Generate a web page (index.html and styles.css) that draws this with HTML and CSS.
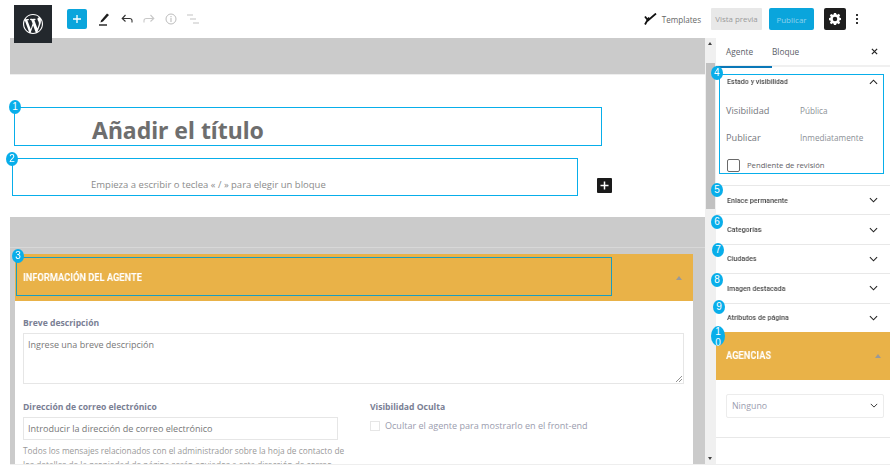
FILE: index.html
```html
<!DOCTYPE html>
<html lang="es">
<head>
<meta charset="utf-8">
<title>Agente</title>
<link rel="stylesheet" href="styles.css">
</head>
<body>
<div class="app">
  <header class="topbar">
    <div class="logo">
      <svg width="20" height="20" viewBox="0 0 20 20"><path fill="#fff" d="M20 10c0-5.51-4.49-10-10-10C4.48 0 0 4.49 0 10c0 5.52 4.48 10 10 10 5.51 0 10-4.48 10-10zM7.78 15.37L4.37 6.22c.55-.02 1.17-.08 1.17-.08.5-.06.44-1.13-.06-1.11 0 0-1.45.11-2.37.11-.18 0-.37 0-.58-.01C4.12 2.69 6.87 1.11 10 1.11c2.33 0 4.45.87 6.05 2.34-.68-.11-1.65.39-1.65 1.58 0 .74.45 1.36.9 2.1.35.61.55 1.36.55 2.46 0 1.49-1.4 5-1.4 5l-3.03-8.37c.54-.02.82-.17.82-.17.5-.05.44-1.25-.06-1.22 0 0-1.44.12-2.38.12-.87 0-2.33-.12-2.33-.12-.5-.03-.56 1.2-.06 1.22l.92.08 1.26 3.41zM17.41 10c.24-.64.74-1.87.43-4.25.7 1.29 1.05 2.71 1.05 4.25 0 3.29-1.73 6.24-4.4 7.78.97-2.59 1.94-5.2 2.92-7.78zM6.1 18.09C3.12 16.65 1.11 13.53 1.11 10c0-1.3.23-2.48.72-3.59C3.25 10.3 4.67 14.2 6.1 18.09zm4.03-6.63l2.58 6.98c-.86.29-1.76.45-2.71.45-.79 0-1.57-.11-2.29-.33.81-2.38 1.62-4.74 2.42-7.1z"/></svg>
    </div>
    <div class="tools">
      <button class="add"><svg width="10" height="10" viewBox="0 0 10 10"><path d="M5 1v8M1 5h8" stroke="#fff" stroke-width="1.3"/></svg></button>
      <svg class="tool pen" width="12" height="14" viewBox="0 0 12 14"><path d="M3 8.500 9 1.500l2 1.500-6 6.500-2.500 1z" fill="#1e1e1e"/><path d="M1 13h8" stroke="#1e1e1e" stroke-width="1.400"/></svg>
      <svg class="tool undo" width="12" height="10" viewBox="0 0 12 10"><path d="M11 8.500V6.500C11 5 10 4.500 8.500 4.500H1.500M4.500 1 1.200 4.500 4.500 7.500" fill="none" stroke="#333" stroke-width="1.100"/></svg>
      <svg class="tool redo" width="12" height="10" viewBox="0 0 12 10"><path d="M1 8.500V6.500C1 5 2 4.500 3.500 4.500h7M7.500 1l3.300 3.500L7.500 7.500" fill="none" stroke="#c8c8c8" stroke-width="1.100"/></svg>
      <svg class="tool info" width="12" height="12" viewBox="0 0 12 12"><circle cx="6" cy="6" r="5" fill="none" stroke="#bdbdbd"/><path d="M6 5v4M6 3v1.200" stroke="#bdbdbd" stroke-width="1.100"/></svg>
      <svg class="tool list" width="12" height="10" viewBox="0 0 12 10"><path d="M0 1h6M3 5h6M6 9h6" stroke="#c4c4c4" stroke-width="1.100"/></svg>
    </div>
    <div class="actions">
      <svg class="tpl" width="13" height="12" viewBox="0 0 13 12"><path d="M1 3.500 4 7.500 12 .5M1 11.500 5 4.500" fill="none" stroke="#111" stroke-width="1.800"/></svg>
      <span class="tpl-label">Templates</span>
      <span class="preview">Vista previa</span>
      <span class="publish">Publicar</span>
      <span class="settings"><svg width="12" height="12" viewBox="0 0 24 24"><path fill="#fff" fill-rule="evenodd" d="M10 1h4l.7 3.200 2 .8 2.800-1.800 2.800 2.800-1.800 2.800.8 2 3.200.7v4l-3.200.7-.8 2 1.800 2.800-2.800 2.800-2.800-1.800-2 .8L14 26.200h-4l-.7-3.200-2-.8-2.800 1.800-2.800-2.800 1.800-2.800-.8-2L-.5 15.700v-4l3.200-.7.8-2L1.700 6.200 4.500 3.400l2.800 1.800 2-.8zM12 9a4 4 0 1 0 0 9 4 4 0 0 0 0-9z" transform="translate(0 -1.500)"/></svg></span>
      <span class="dots"><i></i><i></i><i></i></span>
    </div>
  </header>

  <div class="workspace">
    <main class="editor">
      <div class="band band-top"></div>
      <div class="canvas">
        <h1 class="post-title">Añadir el título</h1>
        <div class="prompt-row">
          <p class="prompt">Empieza a escribir o teclea « / » para elegir un bloque</p>
          <span class="inline-add"><svg width="9" height="9" viewBox="0 0 9 9"><path d="M4.500 .5v8M.5 4.500h8" stroke="#fff" stroke-width="1.500"/></svg></span>
        </div>
      </div>
      <div class="metabox-area">
        <div class="area-line"></div>
        <section class="metabox">
          <div class="orange-head agent-head">
            <span class="cond">INFORMACIÓN DEL AGENTE</span>
            <i class="tri"></i>
          </div>
          <div class="metabox-body">
            <label class="field-label">Breve descripción</label>
            <div class="textarea">Ingrese una breve descripción<svg class="grip" width="7" height="7" viewBox="0 0 7 7"><path d="M1 7 7 1M4 7l3-3" stroke="#777" stroke-width=".8"/></svg></div>
            <div class="columns">
              <div class="col-mail">
                <label class="field-label">Dirección de correo electrónico</label>
                <div class="input">Introducir la dirección de correo electrónico</div>
                <p class="help">Todos los mensajes relacionados con el administrador sobre la hoja de contacto de los detalles de la propiedad de página serán enviados a esta dirección de correo</p>
              </div>
              <div class="col-hidden">
                <label class="field-label">Visibilidad Oculta</label>
                <div class="check-row"><i class="mini-check"></i>Ocultar el agente para mostrarlo en el front-end</div>
              </div>
            </div>
          </div>
        </section>
      </div>
    </main>

    <div class="scrollbar">
      <i class="arrow up"></i>
      <i class="thumb"></i>
      <i class="arrow down"></i>
    </div>

    <aside class="sidebar">
      <nav class="tabs">
        <span class="tab active">Agente</span>
        <span class="tab">Bloque</span>
        <svg class="close" width="7" height="7" viewBox="0 0 8 8"><path d="M1 1l6 6M7 1 1 7" stroke="#222" stroke-width="1.400"/></svg>
      </nav>
      <section class="status">
        <div class="panel-title first"><span class="cond">Estado y visibilidad</span><svg class="chev" width="9" height="6" viewBox="0 0 10 6"><path d="M1 5l4-4 4 4" fill="none" stroke="#222" stroke-width="1.200"/></svg></div>
        <div class="status-row"><span class="key">Visibilidad</span><span class="val">Pública</span></div>
        <div class="status-row second"><span class="key">Publicar</span><span class="val">Inmediatamente</span></div>
        <div class="pending"><i class="box"></i>Pendiente de revisión</div>
      </section>
      <div class="panel-title row"><span class="cond">Enlace permanente</span><svg class="chev" width="9" height="6" viewBox="0 0 10 6"><path d="M1 1l4 4 4-4" fill="none" stroke="#222" stroke-width="1.200"/></svg></div>
      <div class="panel-title row"><span class="cond">Categorías</span><svg class="chev" width="9" height="6" viewBox="0 0 10 6"><path d="M1 1l4 4 4-4" fill="none" stroke="#222" stroke-width="1.200"/></svg></div>
      <div class="panel-title row"><span class="cond">Ciudades</span><svg class="chev" width="9" height="6" viewBox="0 0 10 6"><path d="M1 1l4 4 4-4" fill="none" stroke="#222" stroke-width="1.200"/></svg></div>
      <div class="panel-title row"><span class="cond">Imagen destacada</span><svg class="chev" width="9" height="6" viewBox="0 0 10 6"><path d="M1 1l4 4 4-4" fill="none" stroke="#222" stroke-width="1.200"/></svg></div>
      <div class="panel-title row"><span class="cond">Atributos de página</span><svg class="chev" width="9" height="6" viewBox="0 0 10 6"><path d="M1 1l4 4 4-4" fill="none" stroke="#222" stroke-width="1.200"/></svg></div>
      <div class="orange-head agency-head"><span class="cond">AGENCIAS</span><i class="tri"></i></div>
      <div class="agency-body">
        <div class="select">Ninguno<svg width="8" height="5" viewBox="0 0 10 6"><path d="M1 1l4 4 4-4" fill="none" stroke="#333" stroke-width="1.200"/></svg></div>
      </div>
    </aside>
  </div>

  <div class="mark-box mark-title"></div>
  <div class="mark-box mark-prompt"></div>
  <div class="mark-box mark-agent"></div>
  <div class="mark-box mark-status"></div>
  <b class="badge b1">1</b>
  <b class="badge b2">2</b>
  <b class="badge b3">3</b>
  <b class="badge b4">4</b>
  <b class="badge b5">5</b>
  <b class="badge b6">6</b>
  <b class="badge b7">7</b>
  <b class="badge b8">8</b>
  <b class="badge b9">9</b>
  <b class="badge b10">1<br>0</b>
</div>
</body>
</html>
```
FILE: styles.css
```css
* { box-sizing: border-box; }
html, body { margin: 0; padding: 0; background: #fff; overflow: hidden; }
body { font-family: "Open Sans", "Liberation Sans", sans-serif; color: #555; }
.app { position: relative; width: 894px; height: 469px; overflow: hidden; background: #fff; }

/* top bar */
.topbar { display: flex; align-items: flex-start; height: 38px; padding-left: 14px; }
.logo { width: 38px; height: 38px; margin-top: 5px; background: #23282d; display: flex; align-items: center; justify-content: center; position: relative; z-index: 2; }
.tools { display: flex; align-items: center; height: 38px; margin-left: 15px; }
.add { width: 20px; height: 20px; padding: 0; border: 0; border-radius: 2px; background: #0aa5dc; display: flex; align-items: center; justify-content: center; }
.tool { display: block; }
.pen { margin-left: 11px; }
.undo { margin-left: 11px; }
.redo { margin-left: 10px; }
.info { margin-left: 10px; }
.list { margin-left: 10px; }
.actions { margin-left: auto; display: flex; align-items: center; height: 38px; padding-right: 36px; }
.tpl-label { font-size: 8.100px; color: #666; margin-left: 5px; }
.preview { margin-left: 10px; width: 51px; height: 22px; background: #e8e8e8; color: #9a9a9a; font-size: 7.900px; display: flex; align-items: center; justify-content: center; border-radius: 1px; }
.publish { margin-left: 7px; width: 45px; height: 22px; background: #0aa5dc; color: #8fd2ec; font-size: 8px; display: flex; align-items: center; justify-content: center; border-radius: 2px; }
.settings { margin-left: 10px; width: 22px; height: 22px; background: #1e1e1e; display: flex; align-items: center; justify-content: center; border-radius: 2px; }
.dots { margin-left: 10px; display: flex; flex-direction: column; gap: 2px; }
.dots i { width: 2px; height: 2px; background: #333; display: block; }

/* layout */
.workspace { display: flex; height: 427px; margin-left: 10px; border-bottom: 1px solid #eee; width: 880px; }
.editor { width: 695px; flex: none; display: flex; flex-direction: column; overflow: hidden; background: #cbcbcb; }
.band-top { height: 36px; background: #cbcbcb; flex: none; }
.canvas { height: 143px; flex: none; background: #fff; padding: 41px 0 0 82px; border-top: 1px solid #eee; }
.post-title { margin: 0; font-size: 23px; line-height: 28px; font-weight: 700; color: #6e6e6e; font-family: "Noto Sans", "Open Sans", sans-serif; }
.prompt-row { display: flex; align-items: center; margin-top: 34px; }
.prompt { margin: -1px 0 0 -1px; font-size: 9.500px; line-height: 14px; color: #8b8b8b; width: 506px; }
.inline-add { width: 15px; height: 15px; background: #1a1a1a; border-radius: 1px; display: flex; align-items: center; justify-content: center; }
.metabox-area { flex: 1; padding: 30px 12px 0 5px; min-height: 0; }
.area-line { height: 1px; background: #d8d8d8; margin: 0 -12px 6px -5px; }
.metabox { background: #fff; height: 300px; overflow: hidden; }
.orange-head { display: flex; align-items: center; justify-content: space-between; background: #e9b248; color: #fff; font-family: Roboto, "Liberation Sans", sans-serif; font-weight: 700; }
.cond { display: block; transform: scaleX(.885); transform-origin: left center; white-space: nowrap; will-change: transform; }
.agent-head { height: 47px; padding: 0 11px 0 8px; font-size: 10.500px; }
.tri { width: 0; height: 0; border-left: 3px solid transparent; border-right: 3px solid transparent; border-bottom: 4px solid #999; display: block; }
.metabox-body { padding: 16px 9px 0 8px; }
.field-label { display: block; font-size: 8.600px; line-height: 13px; font-weight: 700; color: #7a8094; }
.textarea { position: relative; margin-top: 3px; height: 51px; border: 1px solid #e6e6e6; font-size: 9px; line-height: 14px; padding: 4px 4px; color: #777; }
.grip { position: absolute; right: 1px; bottom: 1px; }
.columns { display: flex; margin-top: 17px; }
.col-mail { width: 315px; flex: none; }
.col-hidden { margin-left: 32px; }
.input { margin-top: 3px; height: 23px; border: 1px solid #e6e6e6; font-size: 9.050px; line-height: 21px; padding-left: 4px; color: #777; }
.help { margin: 4px 0 0; font-size: 8.300px; line-height: 13.500px; color: #999; width: 322px; }
.check-row { display: flex; align-items: center; margin-top: 5px; font-size: 9.050px; color: #9a9cae; }
.mini-check { width: 10px; height: 10px; border: 1px solid #e6e6e6; margin-right: 5px; display: block; }

/* scrollbar */
.scrollbar { width: 11px; flex: none; background: #f0f0f0; position: relative; display: flex; flex-direction: column; }
.thumb { display: block; position: absolute; left: 1px; top: 25px; width: 9px; height: 146px; background: #c1c1c1; }
.arrow { position: absolute; left: 3px; width: 0; height: 0; border-left: 2.500px solid transparent; border-right: 2.500px solid transparent; }
.arrow.up { top: 4px; border-bottom: 3px solid #444; }
.arrow.down { bottom: 4px; border-top: 3px solid #444; }

/* sidebar */
.sidebar { width: 174px; flex: none; background: #fff; display: flex; flex-direction: column; height: 426px; }
.tabs { height: 29px; display: flex; align-items: center; position: relative; border-bottom: 2px solid #f0f0f0; padding-left: 10px; font-size: 8.300px; color: #5b6068; flex: none; }
.tab { width: 46px; }
.tab.active { position: relative; }
.tab.active::after { content: ""; position: absolute; left: -10px; right: 0; top: 20px; height: 2px; background: #0a78b8; }
.close { margin-left: auto; margin-right: 12px; }
.panel-title { display: flex; align-items: center; justify-content: space-between; font-family: Roboto, "Liberation Sans", sans-serif; font-weight: 500; font-size: 8px; color: #4a4a4a; padding: 0 12px 0 11px; }
.panel-title.first { height: 15px; }
.panel-title.row { height: 29.400px; border-top: 1px solid #e8e8e8; flex: none; }
.status { height: 118px; flex: none; padding-top: 7px; }
.status-row { display: flex; align-items: center; padding-left: 10px; font-size: 9.200px; height: 14px; margin-top: 14px; color: #73767c; }
.status-row.second { margin-top: 13px; }
.key { width: 74px; }
.val { font-size: 8.200px; color: #8b8f96; }
.pending { display: flex; align-items: center; padding-left: 11px; font-size: 7.700px; margin-top: 14px; color: #5f6166; height: 14px; }
.box { width: 13px; height: 13px; border: 1px solid #6a6a6a; border-radius: 2px; margin-right: 7px; display: block; }
.agency-head { height: 48px; flex: none; padding: 0 9px 0 10px; font-size: 10.500px; }
.agency-body { height: 58px; padding: 14px 6px 0 10px; border-bottom: 1px solid #e8e8e8; flex: none; }
.select { height: 24px; border: 1px solid #ececec; border-radius: 2px; display: flex; align-items: center; justify-content: space-between; padding: 0 5px 0 5px; font-size: 8.800px; color: #9a9cae; }

/* annotation overlays */
.mark-box { position: absolute; border: 1px solid #08aeea; }
.mark-title { left: 14px; top: 107px; width: 588px; height: 39px; }
.mark-prompt { left: 12px; top: 158px; width: 566px; height: 38px; }
.mark-agent { left: 16px; top: 257px; width: 596px; height: 39px; border-color: #1a9dc0; }
.mark-status { left: 719px; top: 74px; width: 165px; height: 100px; }
.badge { position: absolute; width: 12px; height: 14px; border-radius: 50%; background: #08aeea; color: #fff; font-family: "Liberation Sans", sans-serif; font-weight: 400; font-size: 10px; line-height: 14px; text-align: center; }
.b1 { left: 9px; top: 100px; }
.b2 { left: 6px; top: 152px; }
.b3 { left: 12px; top: 249px; }
.b4 { left: 711px; top: 66px; }
.b5 { left: 711px; top: 183px; }
.b6 { left: 711px; top: 215px; }
.b7 { left: 712px; top: 243px; }
.b8 { left: 711px; top: 273px; }
.b9 { left: 713px; top: 300px; }
.b10 { left: 711px; top: 326px; width: 14px; height: 20px; line-height: 11px; overflow: hidden; }
```
